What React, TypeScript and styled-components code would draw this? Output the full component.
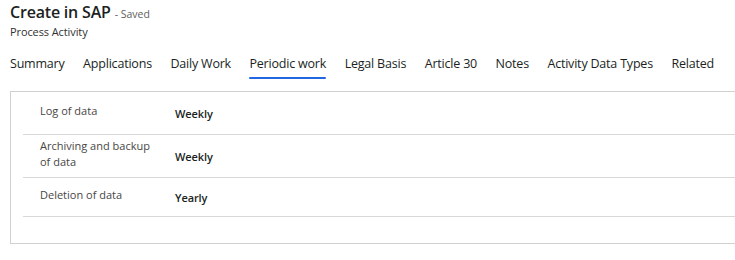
import React from "react";
import styled, { createGlobalStyle } from "styled-components";

const Global = createGlobalStyle`
  html, body { margin: 0; padding: 0; background: #ffffff; }
  body { font-family: "Segoe UI", "Open Sans", "Noto Sans", sans-serif; color: #323130; overflow: hidden; }
`;

const Page = styled.div`
  width: 735px;
  height: 260px;
  overflow: hidden;
  display: flex;
  flex-direction: column;
`;

const Header = styled.div`
  padding: 0 0 0 10px;
  display: flex;
  flex-direction: column;
`;

const TitleRow = styled.div`
  display: flex;
  align-items: baseline;
  gap: 4px;
  height: 25px;
`;

const Title = styled.h1`
  margin: 0;
  font-size: 16px;
  font-weight: 600;
  color: #201f1e;
  line-height: 25px;
  letter-spacing: -0.2px;
`;

const Saved = styled.span`
  font-size: 10.5px;
  line-height: 14px;
  color: #605e5c;
`;

const Subtitle = styled.div`
  font-size: 11px;
  color: #323130;
  line-height: 14px;
  letter-spacing: -0.1px;
`;

const Tabs = styled.nav`
  display: flex;
  gap: 18.5px;
  padding: 0 0 0 10px;
  margin-top: 15px;
`;

const Tab = styled.div<{ $active?: boolean }>`
  font-size: 12.5px;
  letter-spacing: -0.2px;
  color: #201f1e;
  line-height: 20px;
  padding-bottom: 5px;
  position: relative;
  white-space: nowrap;
  &::after {
    content: "";
    position: absolute;
    left: 0;
    right: 0;
    bottom: 0;
    height: 2px;
    border-radius: 1px;
    background: ${(p) => (p.$active ? "#2266e3" : "transparent")};
  }
`;

const Card = styled.section`
  margin: 12px -10px 0 10px;
  border: 1px solid #d1d1d1;
  height: 153px;
  box-sizing: border-box;
  padding: 0 0 0 12px;
`;

const Row = styled.div<{ $h: number }>`
  display: grid;
  grid-template-columns: 135px 1fr;
  align-items: center;
  height: ${(p) => p.$h}px;
  border-bottom: 1px solid #d8d8d8;
  padding-left: 17px;
  box-sizing: border-box;
`;

const Label = styled.div`
  font-size: 11px;
  line-height: 16px;
  color: #484644;
  max-width: 112px;
  padding-bottom: 5px;
`;

const Value = styled.div`
  font-size: 11px;
  font-weight: 600;
  color: #201f1e;
  letter-spacing: -0.1px;
`;

const rows = [
  { label: "Log of data", value: "Weekly", h: 43 },
  { label: "Archiving and backup of data", value: "Weekly", h: 43 },
  { label: "Deletion of data", value: "Yearly", h: 39 },
];

const tabs = [
  "Summary",
  "Applications",
  "Daily Work",
  "Periodic work",
  "Legal Basis",
  "Article 30",
  "Notes",
  "Activity Data Types",
  "Related",
];

export default function App() {
  return (
    <Page>
      <Global />
      <Header>
        <TitleRow>
          <Title>Create in SAP</Title>
          <Saved>- Saved</Saved>
        </TitleRow>
        <Subtitle>Process Activity</Subtitle>
      </Header>
      <Tabs>
        {tabs.map((t) => (
          <Tab key={t} $active={t === "Periodic work"}>
            {t}
          </Tab>
        ))}
      </Tabs>
      <Card>
        {rows.map((r) => (
          <Row key={r.label} $h={r.h}>
            <Label>{r.label}</Label>
            <Value>{r.value}</Value>
          </Row>
        ))}
      </Card>
    </Page>
  );
}
